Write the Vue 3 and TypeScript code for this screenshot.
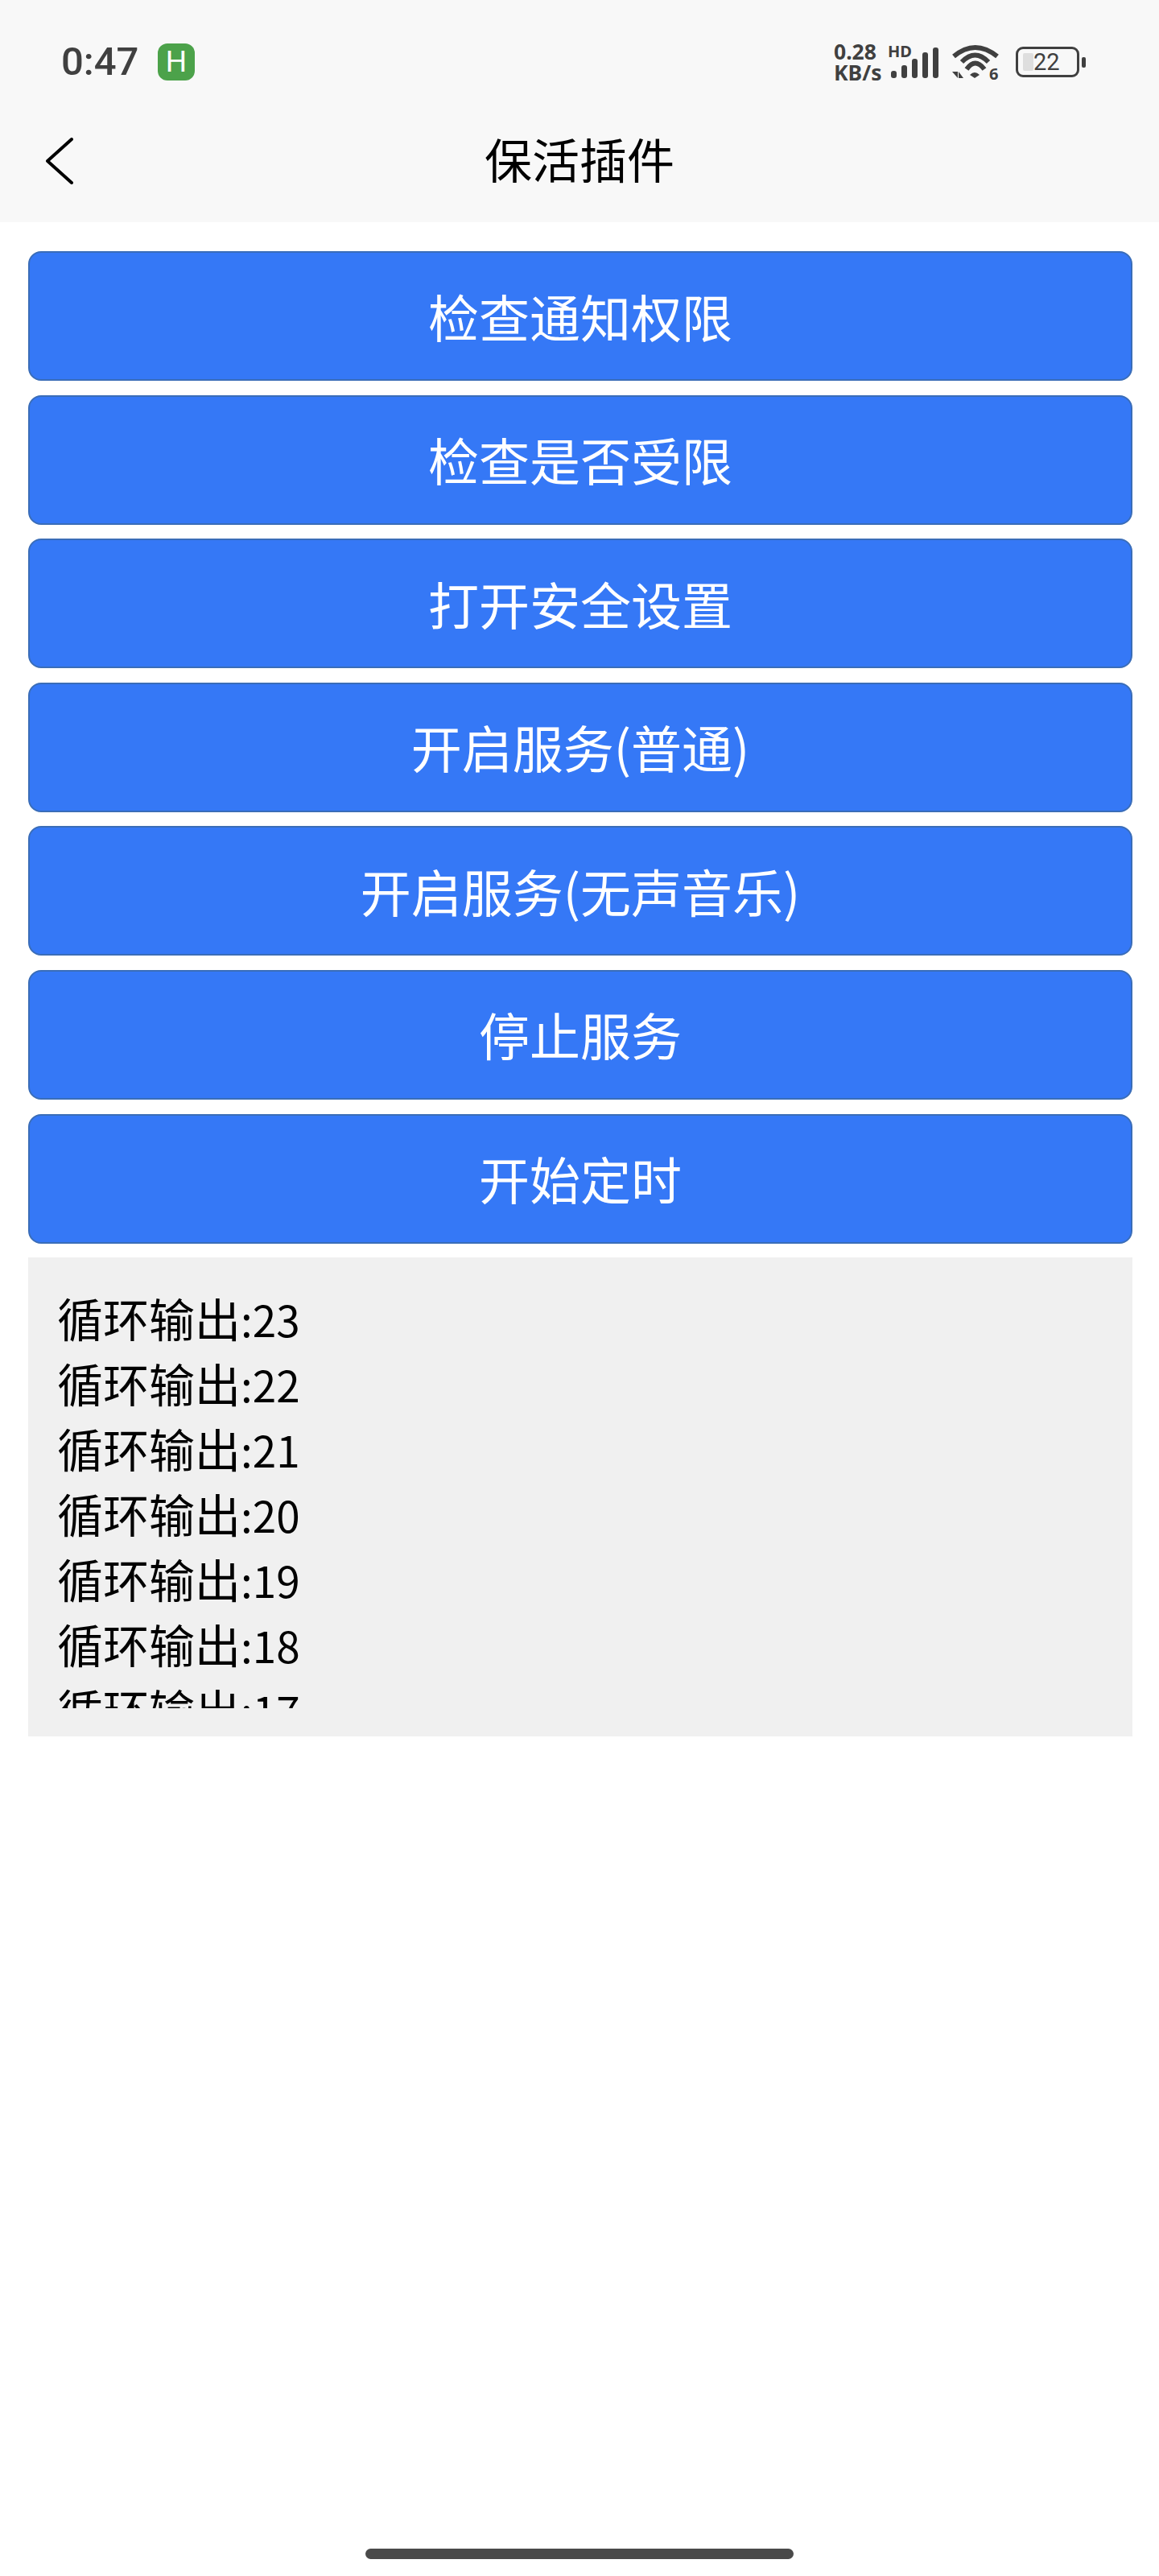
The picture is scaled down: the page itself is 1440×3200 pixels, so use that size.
<script setup lang="ts">
const buttons: string[] = ['检查通知权限', '检查是否受限', '打开安全设置', '开启服务(普通)', '开启服务(无声音乐)', '停止服务', '开始定时']
const logs: number[] = [23, 22, 21, 20, 19, 18, 17]
const bars = [
  { x: 1, y: 30, h: 9 },
  { x: 14, y: 23, h: 16 },
  { x: 27, y: 15, h: 24 },
  { x: 40, y: 7, h: 32 },
  { x: 53, y: 1, h: 38 },
]
</script>

<template>
  <div class="page">
    <header class="header">
      <div class="status">
        <div class="status-left">
          <span class="time">0:47</span>
          <span class="badge">H</span>
        </div>
        <div class="status-right">
          <div class="speed"><span>0.28</span><span>KB/s</span></div>
          <div class="signal">
            <span class="hd">HD</span>
            <svg class="bars" width="60" height="39" viewBox="0 0 60 39">
              <rect v-for="b in bars" :key="b.x" :x="b.x" :y="b.y" width="7" :height="b.h" rx="3" fill="#404040" />
            </svg>
          </div>
          <svg class="wifi" width="60" height="46" viewBox="0 -2 60 46" fill="none" stroke="#404040" stroke-width="6">
            <path d="M3 14 Q29.500 -8 57 14" />
            <path d="M13 21 Q29.500 4 46 21" />
            <path d="M19 30 Q29.500 15 41 30" />
            <path d="M23 37 Q29 31 35 37 L29 41 Z" fill="#404040" stroke="none" />
            <path d="M1 33 H8 V41 Z" fill="#404040" stroke="none" />
            <path d="M9 33 L15 41 H9 Z" fill="#404040" stroke="none" />
            <text x="47" y="43" class="six" fill="#404040" stroke="none">6</text>
          </svg>
          <div class="battery">
            <div class="cell">
              <span class="charge"></span>
              <span class="level">22</span>
            </div>
            <span class="nub"></span>
          </div>
        </div>
      </div>
      <nav class="nav">
        <svg class="back" width="34" height="58" viewBox="0 0 34 58" fill="none" stroke="#000" stroke-width="4" stroke-linecap="round" stroke-linejoin="round">
          <path d="M32 2 L2 29 L32 56" />
        </svg>
        <h1 class="title">保活插件</h1>
        <span></span>
      </nav>
    </header>

    <main class="content">
      <button v-for="label in buttons" :key="label" class="btn" type="button">{{ label }}</button>
      <section class="log">
        <div class="log-inner">
          <div v-for="n in logs" :key="n" class="log-line">循环输出<span class="num">:{{ n }}</span></div>
        </div>
      </section>
    </main>

    <div class="home-wrap"><span class="home"></span></div>
  </div>
</template>

<style>
html, body { margin: 0; background: #fff; }
</style>

<style scoped>
.page {
  width: 1440px;
  height: 3200px;
  display: flex;
  flex-direction: column;
  background: #fff;
  font-family: "Noto Sans CJK SC", "Noto Sans", sans-serif;
}
.header {
  height: 276px;
  box-sizing: border-box;
  padding-top: 54px;
  background: #f8f8f8;
}
.status {
  height: 46px;
  display: flex;
  justify-content: space-between;
  align-items: center;
  padding: 0 91px 0 76px;
}
.status-left { display: flex; align-items: center; gap: 26px; }
.time {
  width: 94px;
  font-family: Roboto, sans-serif;
  font-size: 49px;
  line-height: 46px;
  font-weight: 500;
  color: #404040;
  white-space: nowrap;
}
.badge {
  width: 46px;
  height: 46px;
  border-radius: 12px;
  background: #4ca24a;
  color: #fff;
  font-family: Roboto, sans-serif;
  font-size: 37px;
  line-height: 46px;
  text-align: center;
}
.status-right { display: flex; align-items: center; height: 46px; }
.speed {
  width: 67px;
  display: flex;
  flex-direction: column;
  font-family: "Noto Sans", sans-serif;
  font-size: 26.500px;
  font-weight: 700;
  line-height: 26px;
  color: #404040;
}
.signal { position: relative; width: 60px; height: 46px; margin-left: 3px; margin-right: 16px; }
.hd {
  position: absolute;
  left: -3px;
  top: 0;
  font-family: "Noto Sans", sans-serif;
  font-size: 20px;
  line-height: 20px;
  font-weight: 700;
  color: #404040;
}
.bars { position: absolute; left: 0; top: 4px; }
.wifi { overflow: visible; }
.six { font-family: "Noto Sans", sans-serif; font-size: 20px; font-weight: 700; }
.battery { display: flex; align-items: center; gap: 3px; margin-left: 20px; }
.cell {
  width: 79px;
  height: 38px;
  box-sizing: border-box;
  border: 3px solid #404040;
  border-radius: 9px;
  display: flex;
  align-items: center;
  padding-left: 6px;
}
.charge { width: 13px; height: 22px; background: #dedede; border-radius: 2px; }
.level {
  font-family: Roboto, sans-serif;
  font-size: 29px;
  line-height: 32px;
  color: #404040;
}
.nub { width: 5px; height: 13px; border-radius: 2px; background: #404040; }
.nav {
  height: 176px;
  box-sizing: border-box;
  padding: 24px 0 0 57px;
  display: grid;
  grid-template-columns: 1fr auto 1fr;
  align-items: center;
}
.back { justify-self: start; }
.title {
  margin: -6px 0 0 -57px;
  font-size: 59px;
  line-height: 70px;
  font-weight: 400;
  color: #000;
}
.content {
  padding: 36px 33px 0 35px;
  display: flex;
  flex-direction: column;
  gap: 17.600px;
}
.btn {
  height: 161px;
  margin: 0;
  padding: 0 0 3px;
  box-sizing: border-box;
  border: 2px solid #3a6db8;
  border-radius: 16px;
  background: #3578f6;
  color: #fff;
  font-family: inherit;
  font-size: 63px;
  line-height: 1;
}
.log {
  height: 595px;
  box-sizing: border-box;
  padding: 35px 36px;
  background: #f0f0f0;
}
.log-inner { height: 525px; overflow: hidden; }
.log-line {
  height: 81px;
  font-size: 57px;
  line-height: 81px;
  color: #000;
  white-space: nowrap;
  margin-top: -1px;
  margin-bottom: 1px;
}
.num { font-size: 53px; }
.home-wrap {
  flex: 1;
  display: flex;
  justify-content: center;
  align-items: flex-end;
  padding-bottom: 21px;
}
.home { width: 532px; height: 13px; border-radius: 7px; background: #4a4a4a; }
</style>
